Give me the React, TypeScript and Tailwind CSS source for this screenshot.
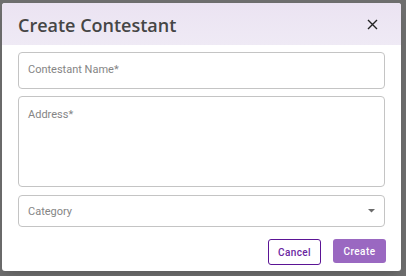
const App = () => {
  return (
    <div className="w-[406px] h-[276px] bg-[#6e6e6e] pt-[3px] pl-[2px] overflow-hidden">
      <div className="w-[399px] h-[268px] bg-white rounded-[3px] shadow-lg flex flex-col overflow-hidden">
        {/* Header */}
        <div className="h-[42px] shrink-0 flex items-center justify-between pl-4 pr-[23px] bg-gradient-to-b from-[#ebe3f2] to-[#efeaf5]">
          <h2 className="text-[18px] font-semibold text-[#454545] font-['Open_Sans',sans-serif] leading-none mt-[1px]">
            Create Contestant
          </h2>
          <svg width="11" height="11" viewBox="0 0 11 11" className="mt-[1px]">
            <path d="M1 1L10 10M10 1L1 10" stroke="#222" strokeWidth="1.4" />
          </svg>
        </div>

        {/* Form */}
        <div className="flex flex-col gap-[7px] px-4 pt-[7px] font-['Roboto',sans-serif]">
          <div className="h-[37px] border border-[#c4c4c4] rounded-[4px] flex items-center px-[9px]">
            <span className="text-[11px] text-[#858585]">Contestant Name*</span>
          </div>
          <div className="h-[91px] border border-[#c4c4c4] rounded-[4px] px-[9px] pt-[4px]">
            <span className="text-[11px] text-[#858585]">Address*</span>
          </div>
          <div className="h-[32px] mt-[1px] border border-[#c4c4c4] rounded-[4px] flex items-center justify-between pl-[9px] pr-[9px]">
            <span className="text-[11px] text-[#858585] mt-[2px]">Category</span>
            <svg width="7" height="4" viewBox="0 0 7 4" className="mb-[1px]">
              <path d="M0 0L7 0L3.5 3.5Z" fill="#6b6b6b" />
            </svg>
          </div>
        </div>

        {/* Actions */}
        <div className="flex justify-end items-start gap-3 pl-4 pr-[15px] mt-[13px] font-['Roboto',sans-serif]">
          <button className="w-[53px] h-[26px] -mt-[1px] border border-[#5b1495] rounded-[3px] text-[10px] font-medium text-[#6a259f] tracking-[0.4px] pt-[1px]">
            Cancel
          </button>
          <button className="w-[53px] h-[24px] -mt-[1px] bg-[#9a68c1] rounded-[3px] text-[10px] font-medium text-white tracking-[0.4px]">
            Create
          </button>
        </div>
      </div>
    </div>
  );
};

export default App;
